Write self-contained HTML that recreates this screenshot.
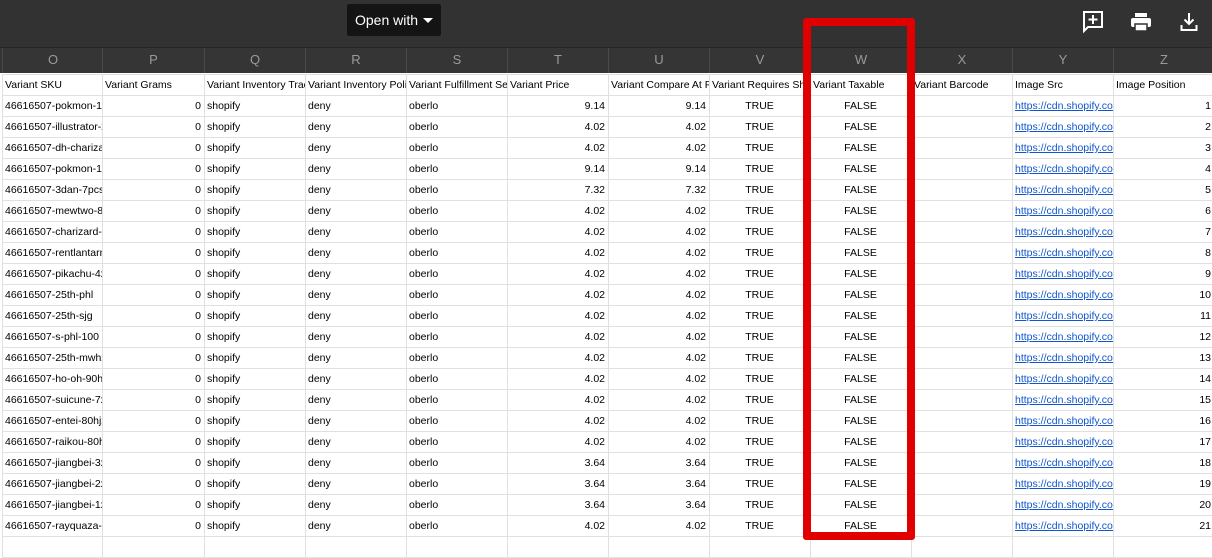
<!DOCTYPE html><html><head><style>
body{margin:0;width:1212px;height:541px;overflow:hidden;background:#fff;font-family:"Liberation Sans",Arial,sans-serif;position:relative}
.top{position:absolute;left:0;top:0;width:1212px;height:47px;background:#323232}
.btn{position:absolute;left:347px;top:4px;width:94px;height:32px;background:#141414;border-radius:2px;color:#fff;font-size:14px;line-height:32px;text-indent:8px}
.btn:after{content:"";position:absolute;left:76px;top:14px;border-left:5px solid transparent;border-right:5px solid transparent;border-top:5px solid #fff}
.ch{position:absolute;left:0;top:47px;width:1212px;height:25px;background:#353535;border-top:1px solid #262626}
.ch div{position:absolute;top:0;height:25px;line-height:24px;text-align:center;color:#9a9a9a;font-size:13px;border-left:1px solid #4a4a4a}
table{position:absolute;left:2px;top:74px;width:1212px;border-collapse:collapse;table-layout:fixed}
td{height:20px;border:1px solid #e0e0e0;font-size:10.5px;padding:0 3px 0 2px;white-space:nowrap;overflow:hidden;color:#000;line-height:20px}
.r{text-align:right}.c{text-align:center}
a{color:#1155cc;text-decoration:underline}
.red{position:absolute;left:803px;top:18px;width:96px;height:506px;border:8px solid #e00000;border-radius:3px}
</style></head><body>
<div class="top"></div>
<div class="btn">Open with</div>
<svg style="position:absolute;left:1082px;top:10px" width="22" height="24" viewBox="0 0 22 24"><path d="M2 2h18v15H6l-4 4z" fill="none" stroke="#fff" stroke-width="2"/><path d="M11 5v9M6.5 9.5h9" stroke="#fff" stroke-width="2"/></svg>
<svg style="position:absolute;left:1130px;top:12px" width="22" height="20" viewBox="0 0 22 20"><rect x="5" y="1" width="12" height="4" fill="#fff"/><rect x="1" y="6" width="20" height="9" rx="2" fill="#fff"/><rect x="5" y="12" width="12" height="7" fill="#fff" stroke="#323232" stroke-width="1.5"/></svg>
<svg style="position:absolute;left:1180px;top:12px" width="18" height="20" viewBox="0 0 18 20"><path d="M9 1v11M4.5 7.5L9 12l4.5-4.5M1.5 13v5h15v-5" fill="none" stroke="#fff" stroke-width="2"/></svg>
<div class="ch">
<div style="left:2px;width:100px">O</div><div style="left:102px;width:101px">P</div><div style="left:204px;width:100px">Q</div><div style="left:305px;width:100px">R</div><div style="left:406px;width:100px">S</div><div style="left:507px;width:100px">T</div><div style="left:608px;width:100px">U</div><div style="left:709px;width:100px">V</div><div style="left:810px;width:100px">W</div><div style="left:911px;width:100px">X</div><div style="left:1012px;width:100px">Y</div><div style="left:1113px;width:100px">Z</div>
</div>
<table>
<colgroup><col style="width:100px"><col style="width:102px"><col style="width:101px"><col style="width:101px"><col style="width:101px"><col style="width:101px"><col style="width:101px"><col style="width:101px"><col style="width:101px"><col style="width:101px"><col style="width:101px"><col style="width:101px"></colgroup>
<tr><td>Variant SKU</td><td>Variant Grams</td><td>Variant Inventory Tracker</td><td>Variant Inventory Policy</td><td>Variant Fulfillment Service</td><td>Variant Price</td><td>Variant Compare At Price</td><td>Variant Requires Shipping</td><td>Variant Taxable</td><td>Variant Barcode</td><td>Image Src</td><td>Image Position</td></tr>
<tbody id="b"></tbody>
</table>
<script>
var s=["pokmon-1xx","illustrator-x","dh-charizard","pokmon-1xx","3dan-7pcs-x","mewtwo-8xx","charizard-xx","rentlantarn","pikachu-4xx","25th-phl","25th-sjg","s-phl-100","25th-mwhx","ho-oh-90hx","suicune-7xx","entei-80hjx","raikou-80hx","jiangbei-3xx","jiangbei-2xx","jiangbei-1xx","rayquaza-xx",""];
var p=["9.14","4.02","4.02","9.14","7.32","4.02","4.02","4.02","4.02","4.02","4.02","4.02","4.02","4.02","4.02","4.02","4.02","3.64","3.64","3.64","4.02"];
var h="";for(var i=0;i<22;i++){if(i==21){h+="<tr>"+"<td></td>".repeat(12)+"</tr>";break;}
h+="<tr><td>46616507-"+s[i]+"</td><td class=r>0</td><td>shopify</td><td>deny</td><td>oberlo</td><td class=r>"+p[i]+"</td><td class=r>"+p[i]+"</td><td class=c>TRUE</td><td class=c>FALSE</td><td></td><td><a>https://cdn.shopify.com/s/files</a></td><td class=r>"+(i+1)+"</td></tr>";}
document.getElementById("b").innerHTML=h;
</script>
<div class="red"></div>
</body></html>
